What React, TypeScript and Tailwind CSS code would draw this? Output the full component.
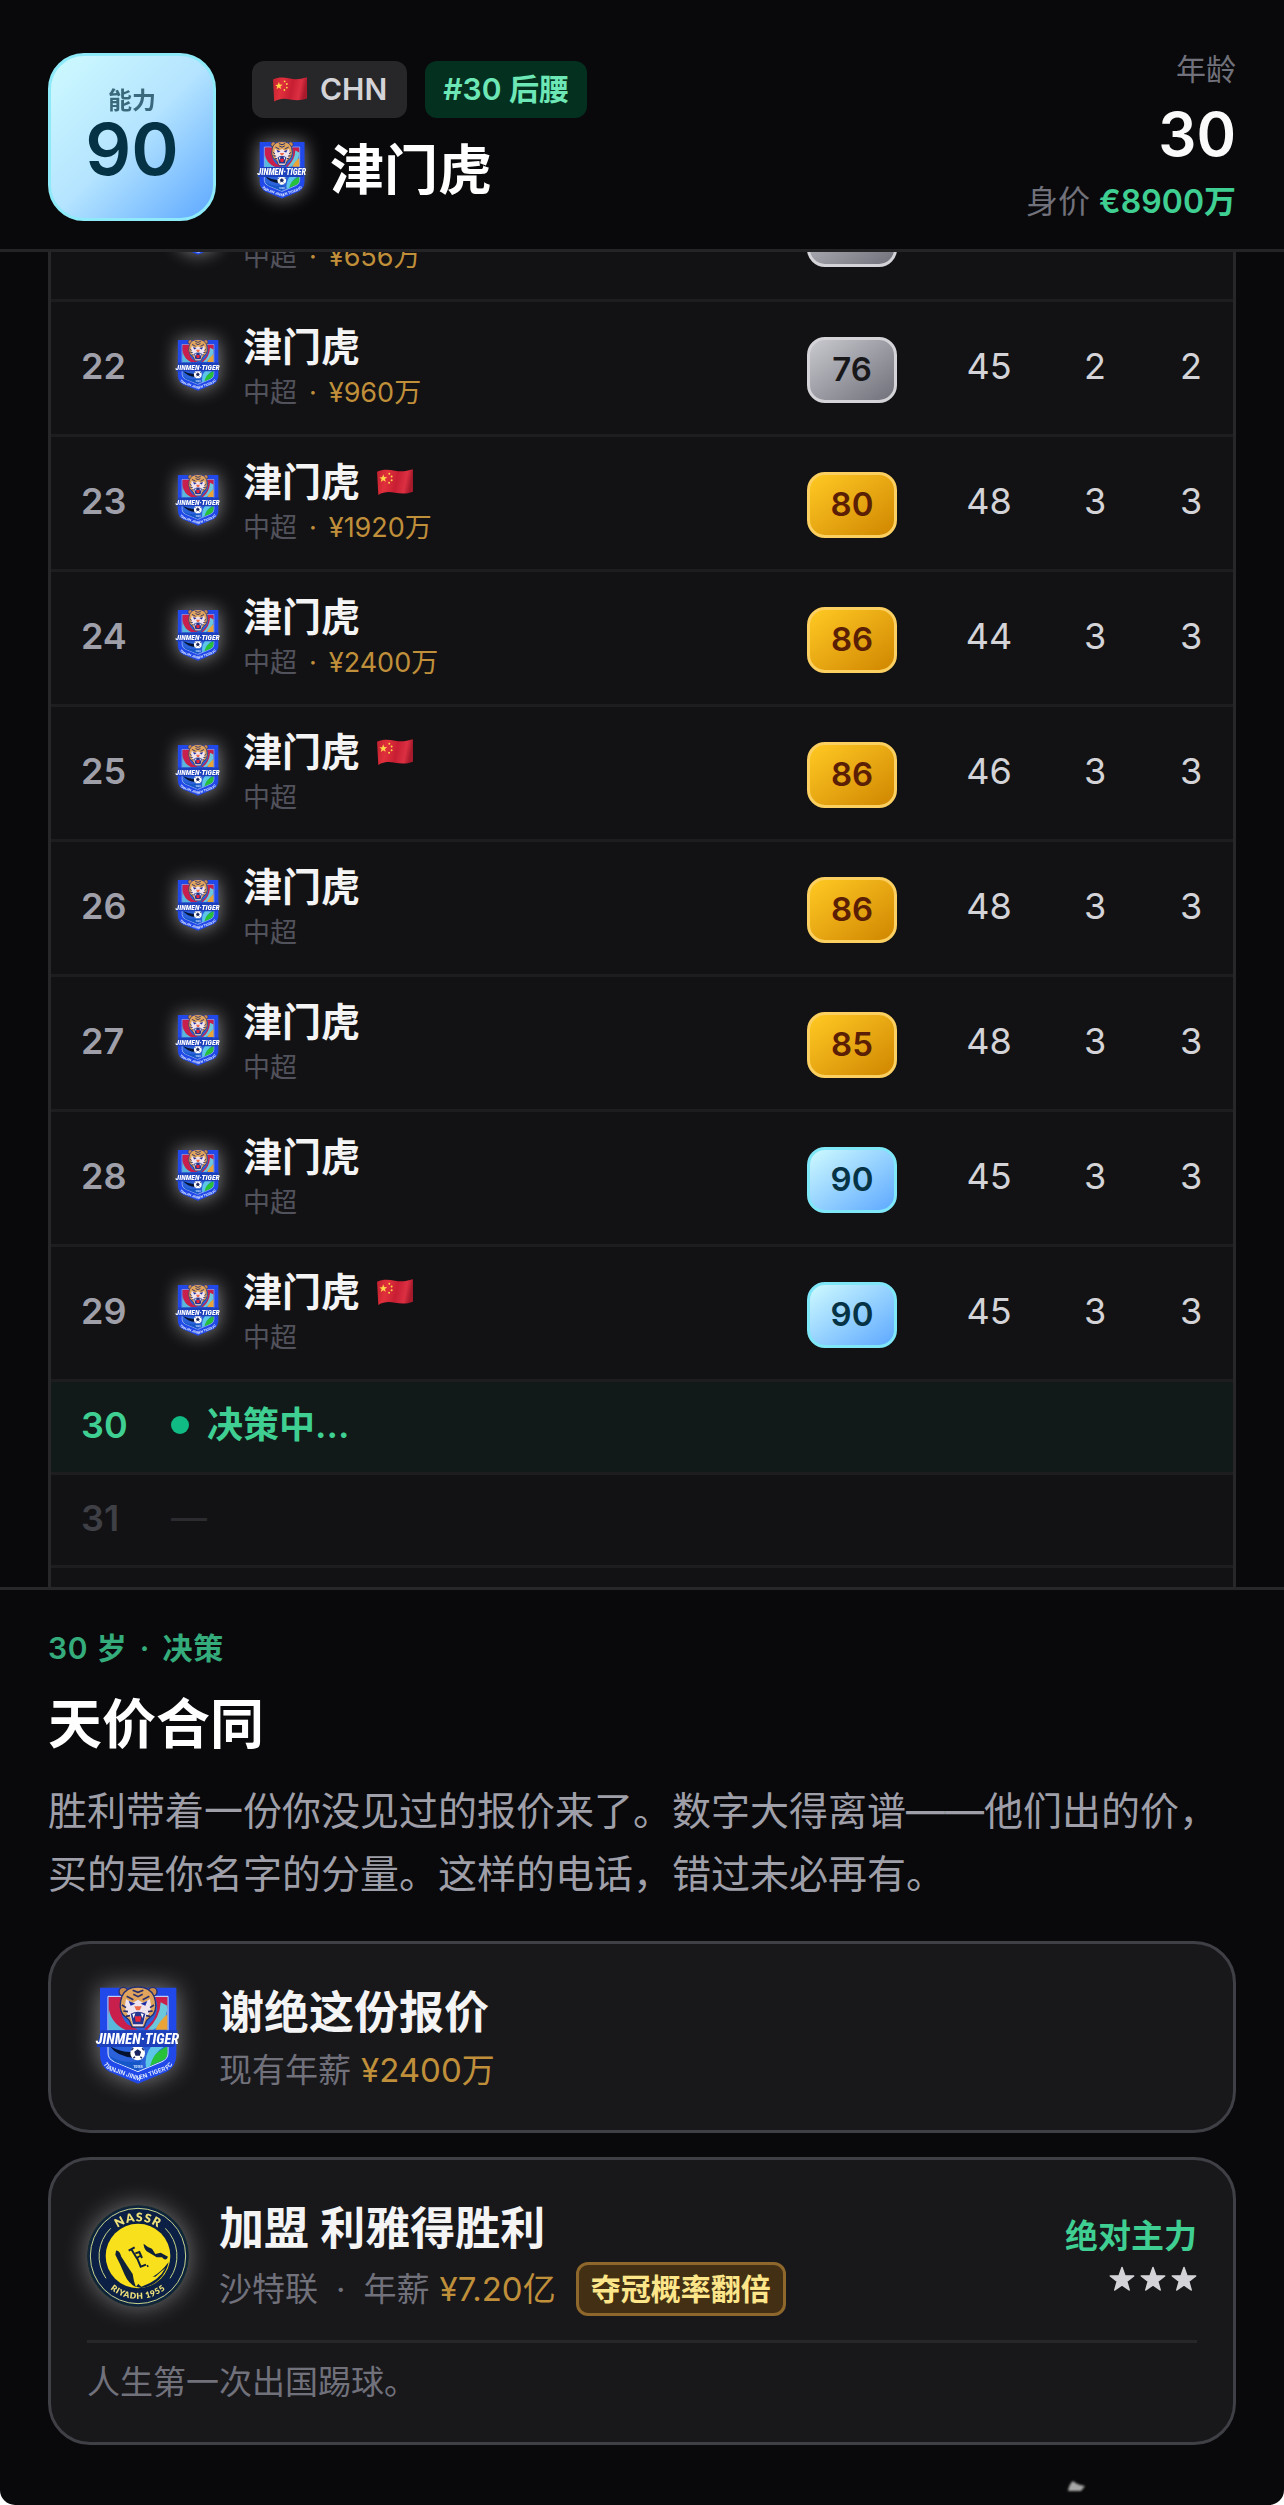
import type { ReactNode } from 'react';
import clsx from 'clsx';

type Tone = 'silver' | 'gold' | 'diamond';

type Season = {
  age: number;
  salary?: string;
  capped?: boolean;
  rating?: number;
  tone: Tone;
  stats: (number | null)[];
};

const SEASONS: Season[] = [
  { age: 21, salary: '¥656万', tone: 'silver', stats: [null, null, null] },
  { age: 22, salary: '¥960万', rating: 76, tone: 'silver', stats: [45, 2, 2] },
  { age: 23, salary: '¥1920万', capped: true, rating: 80, tone: 'gold', stats: [48, 3, 3] },
  { age: 24, salary: '¥2400万', rating: 86, tone: 'gold', stats: [44, 3, 3] },
  { age: 25, capped: true, rating: 86, tone: 'gold', stats: [46, 3, 3] },
  { age: 26, rating: 86, tone: 'gold', stats: [48, 3, 3] },
  { age: 27, rating: 85, tone: 'gold', stats: [48, 3, 3] },
  { age: 28, rating: 90, tone: 'diamond', stats: [45, 3, 3] },
  { age: 29, capped: true, rating: 90, tone: 'diamond', stats: [45, 3, 3] },
];

const TONES: Record<Tone, string> = {
  silver: 'border-[#d4d4d8] from-[#c9c9cf] to-[#71717b] text-[#18181b]',
  gold: 'border-[#fcd060] from-[#ffc922] to-[#d08700] text-[#5a1f04]',
  diamond: 'border-[#7fe6f8] from-[#cefafe] to-[#5ea8ff] text-[#053345]',
};

function Flag({ className }: { className?: string }) {
  return (
    <svg viewBox="0 0 36 27" className={className} role="img" aria-label="中国">
      <defs>
        <linearGradient id="flag-wave" x1="0" x2="1" y1="0" y2="0.15">
          <stop offset="0" stopColor="#c4202f" />
          <stop offset="0.3" stopColor="#e0303c" />
          <stop offset="0.6" stopColor="#c81e33" />
          <stop offset="0.85" stopColor="#dc2f42" />
          <stop offset="1" stopColor="#a81a2c" />
        </linearGradient>
      </defs>
      <path d="M1 3.5C7 .8 12 1.4 18 2.6S29 3 35 1.2V22.5c-6 2.2-11 2-17 .9S7 22.6 2.2 25.6Z" fill="url(#flag-wave)" />
      <path d="m6.8 6 1 2.6 2.8.1-2.2 1.7.8 2.7-2.4-1.5-2.2 1.6.7-2.7L3.200 8.900l2.700-.2Z" fill="#ffd84a" />
      <g fill="#ffd84a">
        <circle cx="12.600" cy="5.400" r="0.900" />
        <circle cx="14.800" cy="8" r="0.900" />
        <circle cx="14.800" cy="11.600" r="0.900" />
        <circle cx="12.400" cy="14" r="0.900" />
      </g>
    </svg>
  );
}

// Tianjin Jinmen Tiger badge
function TigerCrest({ className }: { className?: string }) {
  return (
    <svg viewBox="51 81 306 306" className={clsx('overflow-visible', className)} role="img" aria-label="津门虎">
      <path d="M90 86H319V288Q319 322 290 338L204 374 118 338Q90 322 90 288Z" fill="#2148e8" />
      <path d="M114 112H294V282Q294 300 276 308L204 338 132 308Q114 300 114 282Z" fill="#2b62d9" stroke="#dce8ff" strokeWidth="3" />
      <path d="M116 114H160Q140 160 172 196L204 212H150Q116 196 116 160Z" fill="#c81f4d" />
      <path d="M292 114H256Q270 150 250 182L222 212H246Q292 180 292 140Z" fill="#c81f4d" />
      <path d="M116 146Q122 192 168 214H116Z" fill="#59b9dc" />
      <path d="M272 130Q270 178 232 212H250Q292 190 292 140Z" fill="#6cc7dd" />
      <path d="M292 166Q270 184 256 212H292Z" fill="#eaa336" />
      <path d="M120 262Q160 284 196 278L192 296Q142 294 120 262Z" fill="#04122e" />
      <path d="M118 290Q160 318 214 304L204 336 134 308Z" fill="#1557c9" />
      <path d="M292 262V284Q292 298 274 306L238 322Q236 290 292 262Z" fill="#27c23a" />
      <path d="M244 262H284Q248 284 240 322L228 326Q222 290 244 262Z" fill="#5cc5e8" />
      {/* tiger head */}
      <circle cx="160" cy="98" r="13" fill="#c98a4e" stroke="#27306e" strokeWidth="4" />
      <circle cx="248" cy="98" r="13" fill="#c98a4e" stroke="#27306e" strokeWidth="4" />
      <path d="M204 84Q240 84 252 112 264 144 250 166L230 184 222 204H186L178 184 158 166Q144 144 156 112 168 84 204 84Z" fill="#e0a45c" stroke="#27306e" strokeWidth="4" />
      <path d="M168 120Q158 160 182 176L190 202H218L226 176Q250 160 240 120L220 132 204 122 188 132Z" fill="#efe4ee" />
      <path d="M188 94 204 100 220 94M190 106 204 113 218 106M170 112 190 122M238 112 218 122M156 138 168 146M252 138 240 146M160 156 174 158M248 156 234 158M168 172 180 170M240 172 228 170" stroke="#2b2f6b" strokeWidth="5" fill="none" />
      <path d="M176 126 196 134 182 140ZM232 126 212 134 226 140Z" fill="#1d2da8" />
      <path d="M193 142H215L209 154H199Z" fill="#ef6a4a" />
      <path d="M182 164Q204 152 226 164L219 196H189Z" fill="#26358f" />
      <path d="M194 172H214L211 188H197Z" fill="#e5263c" />
      <path d="M187 165 191 178 196 163ZM212 163 217 178 221 165Z" fill="#fff" />
      {/* ball */}
      <circle cx="203" cy="282" r="22" fill="#fff" />
      <path d="m203 273 8 6-3 9h-10l-3-9ZM184 274l6-6M222 274l-6-6M190 298l5-5M216 298l-5-5" fill="#17245e" stroke="#17245e" strokeWidth="4" />
      <path d="M92 214H324L312 264H80Z" fill="#1c3fbb" />
      <text x="202" y="256" textAnchor="middle" fontSize="43" fontWeight="800" fontStyle="italic" fill="#fff" fontFamily="'Roboto Condensed', 'Open Sans Condensed', 'Liberation Sans Narrow', sans-serif">
        JINMEN·TIGER
      </text>
      <text x="204" y="326" textAnchor="middle" fontSize="12" fontWeight="700" fill="#cfe4ff" fontFamily="Inter, sans-serif">1998</text>
      <path id="crest-arc" d="M94 280Q94 326 124 336L204 364 284 336Q314 326 314 280" fill="none" />
      <text fontSize="18" fontWeight="700" fill="#dce8ff" fontFamily="Inter, sans-serif">
        <textPath href="#crest-arc" startOffset="50%" textAnchor="middle">TIANJIN JINMEN TIGER FC</textPath>
      </text>
    </svg>
  );
}

function NassrLogo({ className }: { className?: string }) {
  return (
    <svg viewBox="27 25 306 306" className={className} role="img" aria-label="利雅得胜利">
      <circle cx="180" cy="178" r="151" fill="#0b2044" />
      <circle cx="180" cy="178" r="150" fill="none" stroke="#132a33" strokeWidth="5" />
      <circle cx="180" cy="178" r="143" fill="none" stroke="#c9d58a" strokeWidth="3" />
      <path d="M98 95A117 117 0 0 0 84 245M262 95A117 117 0 0 1 276 245" fill="none" stroke="#c9d58a" strokeWidth="3" />
      <circle cx="180" cy="178" r="97" fill="#f9e01c" />
      <path d="M114 162Q124 160 130 180L148 208 164 232 168 254 174 272Q150 258 140 234 126 200 112 174Z" fill="#10213a" />
      <path d="M197 141Q206 150 222 156L232 172 248 168 270 180Q264 196 252 182L236 182 220 172 206 164Q196 152 197 141Z" fill="#10213a" />
      <path d="M174 270Q190 246 222 242 250 226 272 196A97 97 0 0 1 190 274Z" fill="#0b2044" />
      <path d="M172 254Q206 236 232 240L262 214Q244 252 190 270Z" fill="#f9e01c" />
      <path d="M152 162 170 152M160 158 176 184 186 178M172 170 184 166 192 184M178 186 188 210 204 204M207 209l4-2" fill="none" stroke="#10213a" strokeWidth="6" />
      <path id="nassr-top" d="M76 178A104 104 0 0 1 284 178" fill="none" />
      <path id="nassr-bottom" d="M51 178A129 129 0 0 0 309 178" fill="none" />
      <g fill="#f0e27a" fontFamily="Lato, sans-serif" fontWeight="800">
        <text fontSize="36" letterSpacing="3">
          <textPath href="#nassr-top" startOffset="50%" textAnchor="middle">NASSR</textPath>
        </text>
        <text fontSize="25" letterSpacing="2">
          <textPath href="#nassr-bottom" startOffset="50%" textAnchor="middle">RIYADH 1955</textPath>
        </text>
      </g>
    </svg>
  );
}

function StarIcon() {
  return (
    <svg viewBox="0 0 26 26" className="size-[26px]" aria-hidden="true">
      <path
        d="M13 1.500 15.900 9.800 24.700 10 17.700 15.300 20.200 24 13 18.900 5.800 24 8.300 15.300 1.300 10 10.100 9.800Z"
        fill="currentColor"
        stroke="currentColor"
        strokeWidth="1.500"
        strokeLinejoin="round"
      />
    </svg>
  );
}

function SeasonRow({ season }: { season: Season }) {
  return (
    <tr className="h-[135px] border-b-3 border-[#1d1d20]">
      <td className="pb-[3px] pl-[30px] font-semibold text-[#9f9fa9]">{season.age}</td>
      <td className="pb-[3px]">
        <div className="flex items-center gap-[18px]">
          <TigerCrest className="size-[54px] shrink-0 drop-shadow-[0_0_9px_rgba(255,255,255,0.5)]" />
          <div>
            <div className="flex items-center gap-4 text-[39px] leading-[54px] font-semibold text-[#f4f4f5]">
              津门虎
              {season.capped && <Flag className="w-[38px]" />}
            </div>
            <div className="text-[27px] leading-[38px] text-[#52525c]">
              中超
              {season.salary && (
                <span className="text-[#c08f3a]"><span className="mx-3">·</span>{season.salary}</span>
              )}
            </div>
          </div>
        </div>
      </td>
      <td className="pt-[5px] text-center">
        <span
          className={clsx(
            'inline-flex h-[66px] w-[90px] items-center justify-center rounded-[18px] border-3 bg-linear-to-br align-middle text-[33px] font-semibold',
            TONES[season.tone],
          )}
        >
          {season.rating}
        </span>
      </td>
      {season.stats.map((n, i) => (
        <td key={i} className="pb-[3px] text-center text-[#d4d4d8]">{n}</td>
      ))}
    </tr>
  );
}

function Offer({ logo, title, meta, aside, note }: {
  logo: ReactNode;
  title: string;
  meta: ReactNode;
  aside?: ReactNode;
  note?: string;
}) {
  return (
    <button type="button" className="block w-full rounded-[42px] border-3 border-[#3f3f46] bg-[#18181b] p-9 text-left">
      <span className="flex items-center gap-[30px]">
        {logo}
        <span className="flex-1">
          <span className="block text-[45px] leading-[66px] font-semibold text-[#f4f4f5]">{title}</span>
          <span className="flex items-center text-[33px] leading-[48px] text-[#71717b]">{meta}</span>
        </span>
        {aside}
      </span>
      {note && (
        <span className="mt-6 block border-t-3 border-[#27272a] pt-[15px] text-[33px] leading-[48px] text-[#71717b]">
          {note}
        </span>
      )}
    </button>
  );
}

export default function App() {
  return (
    <div className="bg-white">
      <div className="relative flex h-screen flex-col overflow-hidden rounded-b-[15px] bg-[#09090b] font-['Inter','Noto_Sans_CJK_SC',sans-serif]">

        {/* Player header */}
        <header className="flex shrink-0 items-center border-b-3 border-[#242427] px-12 pt-[46px] pb-[21px]">
          <div className="flex size-[168px] flex-col items-center justify-center rounded-[36px] border-3 border-[#8eeaf8] bg-linear-to-br from-[#cefafe] via-[#b4e4ff] to-[#5ea8ff] pb-1.5 text-[#053345]">
            <span className="text-2xl leading-[30px] font-semibold opacity-70">能力</span>
            <span className="text-[72px] leading-[66px] font-semibold">90</span>
          </div>
          <div className="ml-9 flex flex-1 flex-col gap-5 pb-2.5">
            <div className="flex gap-[18px] text-[30px] leading-[57px] font-semibold">
              <span className="flex items-center gap-3 rounded-xl bg-[#27272a] px-5 text-[#d4d4d8]">
                <Flag className="w-9" />
                CHN
              </span>
              <span className="rounded-xl bg-[#04301f] px-[18px] text-[#6ee7b7]">#30 后腰</span>
            </div>
            <div className="flex items-center gap-[18px]">
              <TigerCrest className="size-[60px] drop-shadow-[0_0_9px_rgba(255,255,255,0.5)]" />
              <h1 className="text-[54px] leading-[66px] font-bold text-white">津门虎</h1>
            </div>
          </div>
          <div className="text-right text-[#71717b]">
            <div className="text-[30px] leading-[46px]">年龄</div>
            <div className="text-[60px] leading-[84px] font-semibold text-[#fafafa]">30</div>
            <div className="text-[32px] leading-[52px]">
              身价 <span className="font-semibold text-[#3fcf92]">€8900万</span>
            </div>
          </div>
        </header>

        {/* Season log, scrolled down to the current age */}
        <main className="min-h-0 flex-1 overflow-hidden px-12">
          <div className="-mt-[87px] border-x-3 border-[#27272a] bg-[#121214]">
            <table className="w-full table-fixed border-collapse text-[36px]">
              <colgroup>
                <col className="w-[120px]" />
                <col />
                <col className="w-[170px]" />
                <col className="w-[104px]" />
                <col className="w-[108px]" />
                <col className="w-[84px]" />
              </colgroup>
              <tbody>
                {SEASONS.map((s) => (
                  <SeasonRow key={s.age} season={s} />
                ))}
                <tr className="h-[93px] border-b-3 border-[#1d1d20] bg-[#111a18] font-semibold text-[#3fcf92]">
                  <td className="pb-[3px] pl-[30px]">30</td>
                  <td colSpan={5} className="pb-[3px]">
                    <div className="flex items-center gap-[18px]">
                      <span className="size-[18px] rounded-full bg-[#10bc83]" />
                      决策中...
                    </div>
                  </td>
                </tr>
                <tr className="h-[93px] border-b-3 border-[#1d1d20] text-[#2c2c30]">
                  <td className="pb-[3px] pl-[30px] font-semibold text-[#3f3f46]">31</td>
                  <td colSpan={5} className="pb-[3px]">—</td>
                </tr>
                <tr className="h-[93px]">
                  <td colSpan={6} />
                </tr>
              </tbody>
            </table>
          </div>
        </main>

        {/* Decision sheet */}
        <section className="shrink-0 border-t-3 border-[#27272a] px-12 pt-9 pb-[60px]">
          <div className="text-[30px] leading-[45px] font-semibold tracking-wide text-[#35ac7c]">
            30 岁 <span className="mx-1">·</span> 决策
          </div>
          <h2 className="mt-5 text-[54px] leading-[68px] font-bold text-white">天价合同</h2>
          <p className="mt-5 text-[39px] leading-[63px] text-[#9f9fa9]">
            胜利带着一份你没见过的报价来了。数字大得离谱——他们出的价，买的是你名字的分量。这样的电话，错过未必再有。
          </p>
          <div className="mt-9 flex flex-col gap-6">
            <Offer
              logo={<TigerCrest className="size-[102px] drop-shadow-[0_0_12px_rgba(255,255,255,0.45)]" />}
              title="谢绝这份报价"
              meta={<>现有年薪<span className="ml-2.5 text-[#c08f3a]">¥2400万</span></>}
            />
            <Offer
              logo={<NassrLogo className="size-[102px] rounded-full drop-shadow-[0_0_12px_rgba(255,255,255,0.4)]" />}
              title="加盟 利雅得胜利"
              meta={
                <>
                  沙特联<span className="mx-[18px]">·</span>年薪
                  <span className="ml-2.5 text-[#c08f3a]">¥7.20亿</span>
                  <span className="ml-5 rounded-xl border-3 border-[#8d672b] bg-[#432f14] px-3 text-[30px] font-semibold text-[#fde68a]">
                    夺冠概率翻倍
                  </span>
                </>
              }
              aside={
                <span className="flex flex-col items-end gap-1.5 pb-2">
                  <span className="text-[33px] leading-[48px] font-semibold text-[#3fcf92]">绝对主力</span>
                  <span className="flex gap-[5px] text-[#d4d4d8]">
                    <StarIcon />
                    <StarIcon />
                    <StarIcon />
                  </span>
                </span>
              }
              note="人生第一次出国踢球。"
            />
          </div>
        </section>

        <svg viewBox="0 0 18 10" className="absolute right-[199px] bottom-[14px] w-[18px] blur-[1px]" aria-hidden="true">
          <path d="M1 10Q2 3 6 0 10 4 18 5L14 10Z" fill="#a8a8a8" />
        </svg>
      </div>
    </div>
  );
}
